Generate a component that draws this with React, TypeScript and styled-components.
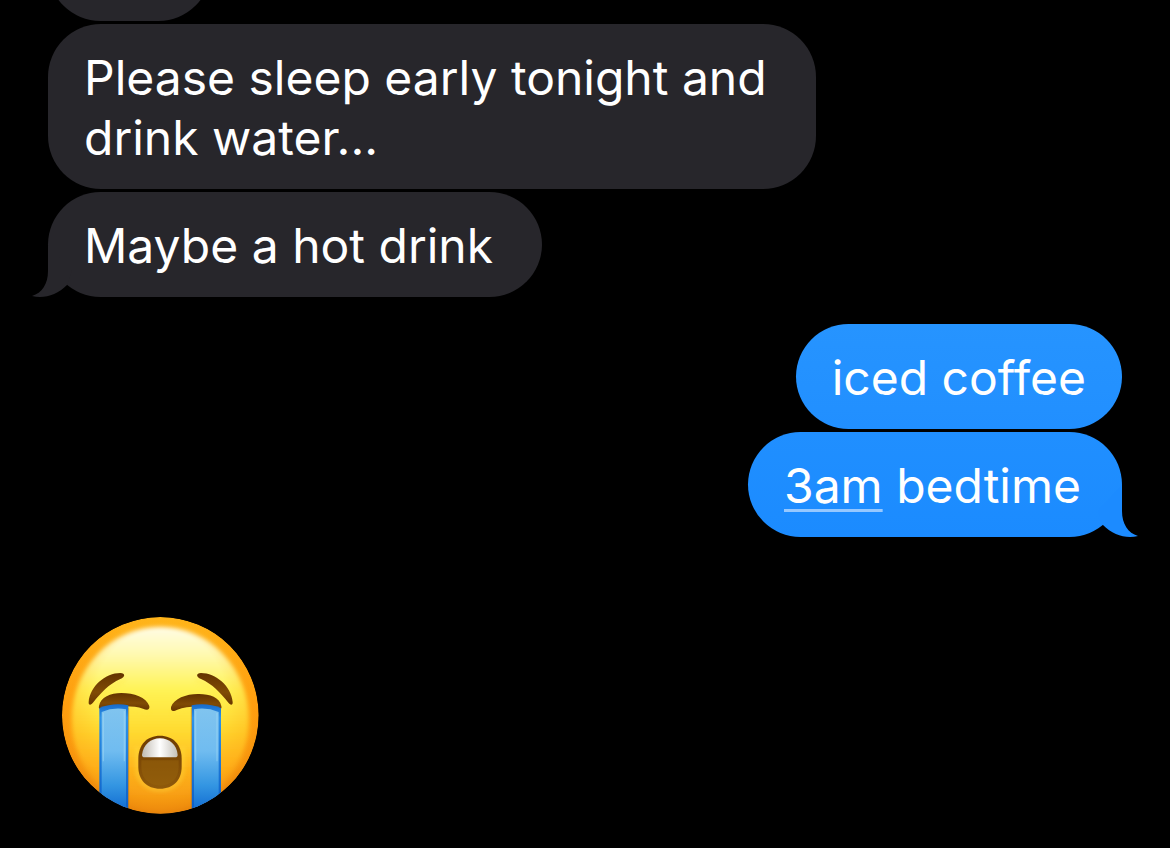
import React from "react";
import styled, { createGlobalStyle, css } from "styled-components";

const GlobalStyle = createGlobalStyle`
  * { box-sizing: border-box; }
  body { margin: 0; background: #000; }
`;

type Side = "received" | "sent";

const Thread = styled.main`
  display: flex;
  flex-direction: column;
  min-height: 100vh;
  padding: 0 48px 34px;
  overflow: hidden;
  background: #000;
  color: #fff;
  font-family: Inter, "Liberation Sans", sans-serif;
  font-size: 48px;
  line-height: 60px;
`;

const Group = styled.section<{ $side: Side }>`
  display: flex;
  flex-direction: column;
  align-items: ${(p) => (p.$side === "sent" ? "flex-end" : "flex-start")};
  gap: 3px;
  margin-bottom: 27px;
`;

const Bubble = styled.div<{
  $side: Side;
  $tone?: "upper" | "lower";
  $minWidth?: number;
}>`
  position: relative;
  max-width: 768px;
  min-width: ${(p) => p.$minWidth ?? 105}px;
  min-height: 105px;
  padding: 24px 36px 21px;
  border-radius: 53px;
  ${(p) =>
    p.$side === "received"
      ? css`
          background: #27262b;
        `
      : p.$tone === "upper"
        ? css`
            background: linear-gradient(#2694ff, #218fff);
          `
        : css`
            background: linear-gradient(#208fff, #1b8bff);
          `}
`;

const ScrolledOff = styled.div`
  display: flex;
  align-items: flex-end;
  height: 21px;
  overflow: hidden;
`;

const ShortBubble = styled(Bubble)`
  flex: none;
  width: 163px;
`;

const Text = styled.p`
  margin: 0;
`;

const TailShape = styled.svg<{ $side: Side }>`
  position: absolute;
  bottom: 0;
  width: 50px;
  height: 57px;
  ${(p) =>
    p.$side === "received"
      ? css`
          left: -16px;
          color: #27262b;
        `
      : css`
          right: -16px;
          color: #1c8bff;
          transform: scaleX(-1);
        `}
`;

const DetectedTime = styled.a`
  color: inherit;
  text-decoration: underline;
  text-decoration-color: #96c8ff;
  text-decoration-thickness: 3px;
  text-underline-offset: 6px;
  text-decoration-skip-ink: none;
`;

const Sticker = styled.svg`
  display: block;
  width: 197px;
  height: 197px;
  margin: 53px 0 0 14px;
`;

function Tail({ side }: { side: Side }) {
  return (
    <TailShape $side={side} viewBox="0 0 50 57" aria-hidden="true">
      <path
        d="M16 5V31C16 44 10 53 0 56C12 59 25 55 35 45L40 31Z"
        fill="currentColor"
      />
    </TailShape>
  );
}

function CryingFace() {
  return (
    <Sticker viewBox="36 37 591 591" role="img" aria-label="Loudly crying face">
      <defs>
        <linearGradient id="rim" x1="0" y1="0" x2="0" y2="1">
          <stop offset="0" stopColor="#ffb81c" />
          <stop offset="0.45" stopColor="#ffa010" />
          <stop offset="0.75" stopColor="#f79a12" />
          <stop offset="1" stopColor="#d98516" />
        </linearGradient>
        <linearGradient id="skin" x1="0" y1="0" x2="0" y2="1">
          <stop offset="0" stopColor="#fffce6" />
          <stop offset="0.15" stopColor="#fff9b0" />
          <stop offset="0.34" stopColor="#fff355" />
          <stop offset="0.55" stopColor="#ffdc32" />
          <stop offset="0.75" stopColor="#ffbb20" />
          <stop offset="1" stopColor="#ee9616" />
        </linearGradient>
        <radialGradient id="shade" cx="0.5" cy="0.4" r="0.6">
          <stop offset="0.55" stopColor="#ff9a0a" stopOpacity="0" />
          <stop offset="0.82" stopColor="#ff9b0d" stopOpacity="0.35" />
          <stop offset="1" stopColor="#ea8208" stopOpacity="0.8" />
        </radialGradient>
        <linearGradient id="tear" x1="0" y1="0" x2="0" y2="1">
          <stop offset="0" stopColor="#80c4ef" />
          <stop offset="0.4" stopColor="#70bcf0" />
          <stop offset="0.72" stopColor="#3496e2" />
          <stop offset="1" stopColor="#0b65cf" />
        </linearGradient>
        <linearGradient id="tearEdge" x1="0" y1="0" x2="0" y2="1">
          <stop offset="0" stopColor="#176bcb" />
          <stop offset="0.12" stopColor="#2f93e8" />
          <stop offset="1" stopColor="#0a5cc6" />
        </linearGradient>
        <linearGradient id="brow" x1="0" y1="0" x2="0" y2="1">
          <stop offset="0" stopColor="#633300" />
          <stop offset="0.6" stopColor="#804b05" />
          <stop offset="1" stopColor="#683600" />
        </linearGradient>
        <linearGradient id="mouth" x1="0" y1="0" x2="0" y2="1">
          <stop offset="0" stopColor="#6d3b02" />
          <stop offset="0.5" stopColor="#7e4a06" />
          <stop offset="1" stopColor="#8f5a0b" />
        </linearGradient>
        <linearGradient id="teeth" x1="0" y1="0" x2="1" y2="0">
          <stop offset="0" stopColor="#c0bbb3" />
          <stop offset="0.5" stopColor="#ffffff" />
          <stop offset="1" stopColor="#c4c0b8" />
        </linearGradient>
        <filter id="soft" x="-20%" y="-20%" width="140%" height="140%">
          <feGaussianBlur stdDeviation="6" />
        </filter>
        <clipPath id="face">
          <circle cx="331" cy="332" r="295" />
        </clipPath>
      </defs>
      <g clipPath="url(#face)">
        <circle cx="331" cy="332" r="295" fill="url(#rim)" />
        <ellipse cx="331" cy="345" rx="266" ry="279" fill="url(#skin)" filter="url(#soft)" />
        <circle cx="331" cy="332" r="295" fill="url(#shade)" />
        <g fill="none" stroke="#ffe94a" strokeWidth="7" strokeLinecap="round" opacity="0.6" filter="url(#soft)">
          <path d="M128 307C150 270 182 245 224 226" />
          <path d="M438 226C480 242 515 270 540 306" />
          <path d="M236 309Q268 309 292 322" />
          <path d="M370 324Q395 309 424 309" />
          <path d="M262 430V494C262 575 398 575 398 494V430" />
        </g>
        <g fill="url(#brow)">
          <path d="M116 292C120 244 167 205 211 205C227 206 226 217 211 223C177 238 152 265 130 293C123 303 115 303 116 292Z" />
          <path d="M548 292C544 244 497 205 453 205C437 206 438 217 453 223C487 238 512 265 534 293C541 303 549 303 548 292Z" />
          <path d="M147 304C151 278 182 265 214 265C252 265 289 278 298 304C300 317 290 317 279 312C249 301 192 304 158 312C148 315 145 311 147 304Z" />
          <path d="M514 304C509 279 480 268 447 268C411 267 372 281 363 307C361 321 370 321 382 315C413 302 466 303 502 312C513 315 516 311 514 304Z" />
        </g>
        <g>
          <path d="M148 310Q190 293 235 302V630H148Z" fill="url(#tearEdge)" />
          <path d="M155 322Q190 307 228 314V630H155Z" fill="url(#tear)" />
          <path d="M425 302Q470 293 513 310V630H425Z" fill="url(#tearEdge)" />
          <path d="M432 314Q470 307 506 322V630H432Z" fill="url(#tear)" />
          <path d="M160 325V470M223 319V470M437 319V470M501 325V470" fill="none" stroke="#a6dbf5" strokeWidth="4" opacity="0.45" />
          <path d="M236 309V630M424 309V630" fill="none" stroke="#c97712" strokeWidth="3" opacity="0.5" />
        </g>
        <path
          d="M265 462C265 420 291 393 330 393C369 393 395 420 395 462V486C395 526 370 552 330 552C290 552 265 526 265 486Z"
          fill="url(#mouth)"
        />
        <path
          d="M274 467H386V487C386 521 364 543 330 543C296 543 274 521 274 487Z"
          fill="#95600b"
          opacity="0.6"
        />
        <path
          d="M276 450C280 420 302 401 330 401C358 401 380 420 383 450Q383 458 375 458H284Q276 458 276 450Z"
          fill="url(#teeth)"
        />
      </g>
    </Sticker>
  );
}

export default function App() {
  return (
    <>
      <GlobalStyle />
      <Thread>
        <Group $side="received">
          <ScrolledOff>
            <ShortBubble $side="received" />
          </ScrolledOff>
          <Bubble $side="received">
            <Text>Please sleep early tonight and drink water...</Text>
          </Bubble>
          <Bubble $side="received" $minWidth={494}>
            <Tail side="received" />
            <Text>Maybe a hot drink</Text>
          </Bubble>
        </Group>
        <Group $side="sent">
          <Bubble $side="sent" $tone="upper">
            <Text>iced coffee</Text>
          </Bubble>
          <Bubble $side="sent" $tone="lower" $minWidth={374}>
            <Tail side="sent" />
            <Text>
              <DetectedTime href="#time">3am</DetectedTime> bedtime
            </Text>
          </Bubble>
        </Group>
        <CryingFace />
      </Thread>
    </>
  );
}
